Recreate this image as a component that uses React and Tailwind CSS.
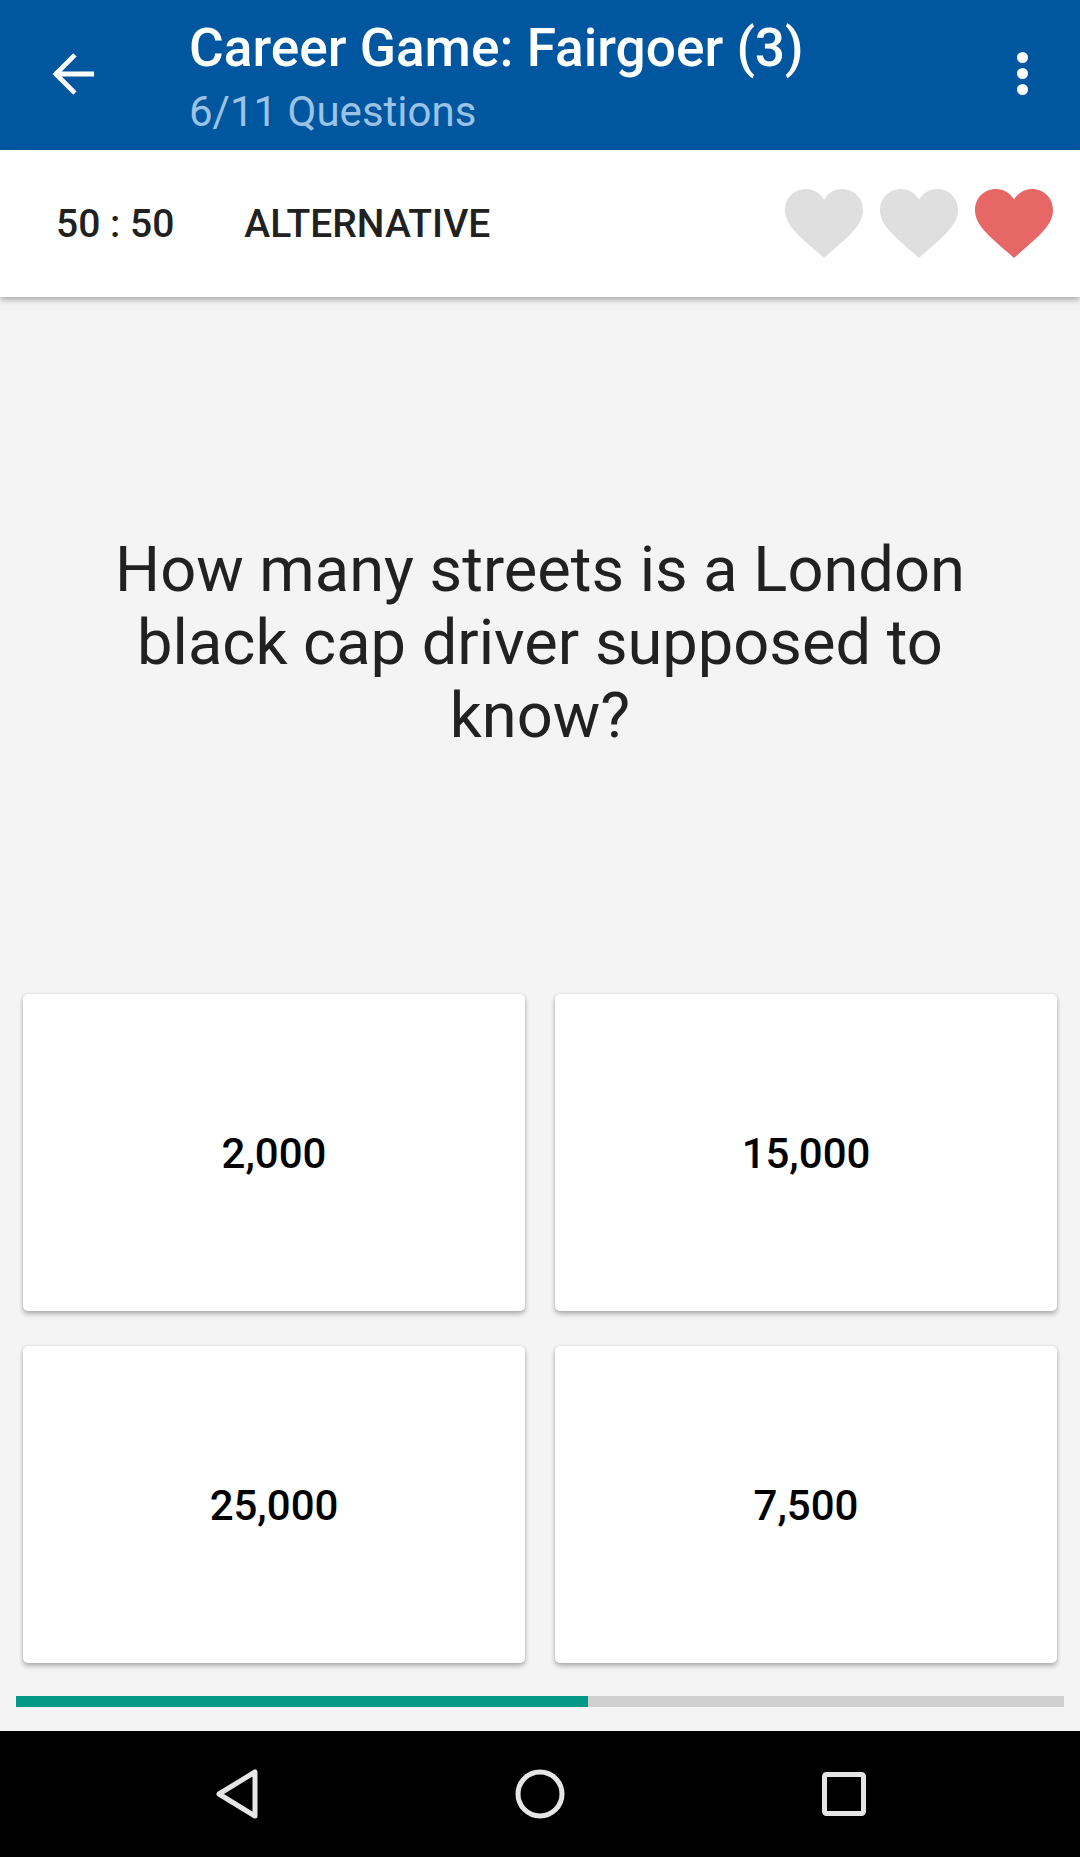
const HEART = "M39 69L33.5 64C14 47 0 36 0 21C0 9 9 0 21 0C28.5 0 35 4 39 10.5C43 4 49.5 0 57 0C69 0 78 9 78 21C78 36 64 47 44.5 64Z";

function Heart({ color }) {
  return (
    <svg viewBox="0 0 78 69" className="w-[78px] h-[69px] shrink-0">
      <path d={HEART} fill={color} />
    </svg>
  );
}

function Card({ children }) {
  return (
    <div className="h-[317px] bg-white rounded-[5px] shadow-[0_3px_5px_rgba(0,0,0,0.28),0_0_3px_rgba(0,0,0,0.1)] flex items-center justify-center text-[42px] font-medium text-black pt-[2px]">
      {children}
    </div>
  );
}

export default function App() {
  return (
    <div className="w-[1080px] h-[1857px] flex flex-col bg-[#f4f4f4] overflow-hidden font-['Roboto',sans-serif]">
      <header className="h-[150px] shrink-0 bg-[#01579f] flex items-start">
        <div className="w-[189px] h-full shrink-0 flex items-center pl-[52px] pb-[3px]">
          <svg viewBox="0 0 46 46" className="w-[44px] h-[44px]" fill="none" stroke="white" strokeWidth="5">
            <path d="M44 23H4" />
            <path d="M24 3L4 23l20 20" />
          </svg>
        </div>
        <div className="flex flex-col flex-1">
          <div className="text-[53.2px] leading-[62px] mt-[17px] font-medium text-white">Career Game: Fairgoer (3)</div>
          <div className="text-[42px] leading-[50px] mt-[8px] text-[#9cc3e6]">6/11 Questions</div>
        </div>
        <div className="w-[58px] mr-[29px] h-full flex flex-col items-center justify-center gap-[5px] pb-[3px] shrink-0">
          <span className="w-[11px] h-[11px] rounded-full bg-white" />
          <span className="w-[11px] h-[11px] rounded-full bg-white" />
          <span className="w-[11px] h-[11px] rounded-full bg-white" />
        </div>
      </header>

      <div className="h-[147px] shrink-0 bg-white shadow-[0_3px_6px_rgba(0,0,0,0.3)] flex items-center pl-[56px] pr-[27px] text-[39px] font-medium text-[#212121] relative">
        <span className="pt-[2px]">50 : 50</span>
        <span className="ml-[70px] pt-[2px]">ALTERNATIVE</span>
        <div className="ml-auto flex items-center gap-[17px]">
          <Heart color="#dfdfdf" />
          <Heart color="#dfdfdf" />
          <Heart color="#e76666" />
        </div>
      </div>

      <main className="flex-1 flex flex-col min-h-0">
        <div className="flex-1 flex items-center justify-center px-[100px] pb-[6px]">
          <p className="text-[63.2px] leading-[73px] text-center text-[#212121]">
            How many streets is a London black cap driver supposed to know?
          </p>
        </div>
        <div className="grid grid-cols-2 gap-x-[30px] gap-y-[35px] px-[23px] mb-[33px]">
          <Card>2,000</Card>
          <Card>15,000</Card>
          <Card>25,000</Card>
          <Card>7,500</Card>
        </div>
        <div className="mx-[16px] h-[11px] bg-[#d0d0d0] mb-[24px] shrink-0">
          <div className="h-full bg-[#039887]" style={{ width: `${(572 / 1048) * 100}%` }} />
        </div>
      </main>

      <nav className="h-[126px] shrink-0 bg-black flex items-center justify-center">
        <div className="grid grid-cols-3 w-[909px] items-center justify-items-center">
          <svg viewBox="0 0 44 50" className="w-[44px] h-[50px]" fill="none" stroke="#e6e6e6" strokeWidth="5" strokeLinejoin="round">
            <path d="M40 3v44L4 25z" />
          </svg>
          <svg viewBox="0 0 50 50" className="w-[50px] h-[50px]" fill="none" stroke="#e6e6e6" strokeWidth="5">
            <circle cx="25" cy="25" r="22" />
          </svg>
          <svg viewBox="0 0 44 44" className="w-[44px] h-[44px] ml-[2px]" fill="none" stroke="#e6e6e6" strokeWidth="5" strokeLinejoin="round">
            <rect x="2.5" y="2.5" width="39" height="39" rx="2" />
          </svg>
        </div>
      </nav>
    </div>
  );
}
